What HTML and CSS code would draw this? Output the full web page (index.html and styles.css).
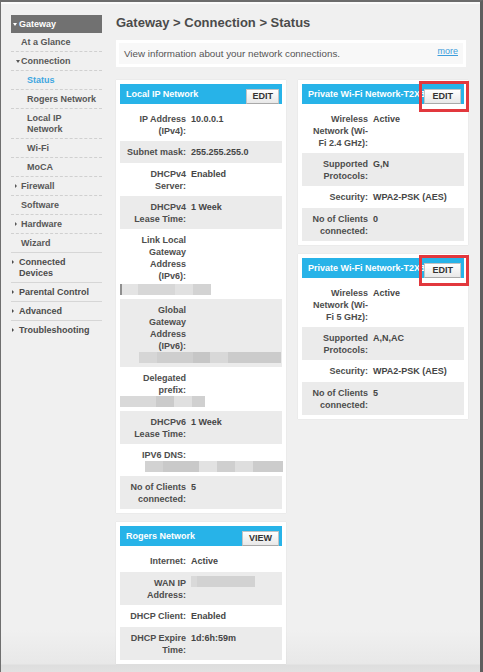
FILE: index.html
```html
<!DOCTYPE html>
<html lang="en">
<head>
<meta charset="utf-8">
<title>Gateway &gt; Connection &gt; Status</title>
<link rel="stylesheet" href="styles.css">
</head>
<body>
<div class="window">
  <nav class="sidebar">
    <div class="nav-head"><span class="caret caret-down"></span>Gateway</div>
    <div class="nav-item l2">At a Glance</div>
    <div class="nav-item l2"><span class="caret caret-down"></span>Connection</div>
    <div class="nav-item l3 active">Status</div>
    <div class="nav-item l3">Rogers Network</div>
    <div class="nav-item l3">Local IP<br>Network</div>
    <div class="nav-item l3">Wi-Fi</div>
    <div class="nav-item l3">MoCA</div>
    <div class="nav-item l2"><span class="caret caret-right"></span>Firewall</div>
    <div class="nav-item l2">Software</div>
    <div class="nav-item l2"><span class="caret caret-right"></span>Hardware</div>
    <div class="nav-item l2 solid">Wizard</div>
    <div class="nav-item l1"><span class="caret caret-right"></span>Connected<br>Devices</div>
    <div class="nav-item l1"><span class="caret caret-right"></span>Parental Control</div>
    <div class="nav-item l1"><span class="caret caret-right"></span>Advanced</div>
    <div class="nav-item l1 last"><span class="caret caret-right"></span>Troubleshooting</div>
  </nav>

  <main class="main">
    <h1 class="page-title">Gateway &gt; Connection &gt; Status</h1>
    <div class="intro">
      <div class="intro-inner">
        <span>View information about your network connections.</span>
        <a class="more" href="#">more</a>
      </div>
    </div>

    <div class="columns">
      <div class="col">
        <section class="card">
          <header class="card-head">
            <h2 class="card-title">Local IP Network</h2>
            <span class="btn">EDIT</span>
          </header>
          <div class="rows">
            <div class="row"><div class="label">IP Address (IPv4):</div><div class="value">10.0.0.1</div></div>
            <div class="row"><div class="label">Subnet mask:</div><div class="value">255.255.255.0</div></div>
            <div class="row"><div class="label">DHCPv4 Server:</div><div class="value">Enabled</div></div>
            <div class="row"><div class="label">DHCPv4 Lease Time:</div><div class="value">1 Week</div></div>
            <div class="row row-stack"><div class="label">Link Local Gateway Address (IPv6):</div><div class="blur blur-link"></div></div>
            <div class="row row-stack"><div class="label">Global Gateway Address (IPv6):</div><div class="blur blur-global"></div></div>
            <div class="row row-stack"><div class="label">Delegated prefix:</div><div class="blur blur-prefix"></div></div>
            <div class="row"><div class="label">DHCPv6 Lease Time:</div><div class="value">1 Week</div></div>
            <div class="row row-stack"><div class="label">IPV6 DNS:</div><div class="blur blur-dns"></div></div>
            <div class="row"><div class="label">No of Clients connected:</div><div class="value">5</div></div>
          </div>
        </section>

        <section class="card">
          <header class="card-head">
            <h2 class="card-title">Rogers Network</h2>
            <span class="btn btn-view">VIEW</span>
          </header>
          <div class="rows">
            <div class="row"><div class="label">Internet:</div><div class="value">Active</div></div>
            <div class="row"><div class="label">WAN IP Address:</div><div class="value"><span class="blur-wan"></span></div></div>
            <div class="row"><div class="label">DHCP Client:</div><div class="value">Enabled</div></div>
            <div class="row"><div class="label">DHCP Expire Time:</div><div class="value">1d:6h:59m</div></div>
          </div>
        </section>

        <section class="card">
          <header class="card-head"></header>
        </section>
      </div>

      <div class="col">
        <section class="card">
          <header class="card-head">
            <h2 class="card-title">Private Wi-Fi Network-T2X36</h2>
            <span class="btn btn-wide">EDIT<span class="annot"></span></span>
          </header>
          <div class="rows">
            <div class="row"><div class="label">Wireless Network (Wi-Fi 2.4 GHz):</div><div class="value">Active</div></div>
            <div class="row"><div class="label">Supported Protocols:</div><div class="value">G,N</div></div>
            <div class="row"><div class="label">Security:</div><div class="value">WPA2-PSK (AES)</div></div>
            <div class="row"><div class="label">No of Clients connected:</div><div class="value">0</div></div>
          </div>
        </section>

        <section class="card">
          <header class="card-head">
            <h2 class="card-title">Private Wi-Fi Network-T2X36</h2>
            <span class="btn btn-wide">EDIT<span class="annot"></span></span>
          </header>
          <div class="rows">
            <div class="row"><div class="label">Wireless Network (Wi-Fi 5 GHz):</div><div class="value">Active</div></div>
            <div class="row"><div class="label">Supported Protocols:</div><div class="value">A,N,AC</div></div>
            <div class="row"><div class="label">Security:</div><div class="value">WPA2-PSK (AES)</div></div>
            <div class="row"><div class="label">No of Clients connected:</div><div class="value">5</div></div>
          </div>
        </section>
      </div>
    </div>
  </main>
</div>
</body>
</html>
```

FILE: styles.css
```css
html, body {
  margin: 0;
  padding: 0;
  overflow: hidden;
}

body {
  font-family: "Liberation Sans", Arial, sans-serif;
  color: #4a4a4a;
}

.window {
  box-sizing: border-box;
  height: 672px;
  display: flex;
  align-items: flex-start;
  padding: 13px 12px 0 10px;
  border-top: 2px solid #6c6c6c;
  border-left: 1px solid #6f6f6f;
  border-right: 3px solid #5e5e5e;
  box-shadow: inset 0 2px 0 #fbfbfb;
  overflow: hidden;
  background: linear-gradient(to bottom, #f0f0f0 0, #f0f0f0 628px, #e8e8e8 662px, #dedede 663px, #e1e1e1 670px);
}

/* ---------- sidebar ---------- */
.sidebar {
  flex: none;
  width: 91px;
  font-size: 9px;
  font-weight: bold;
  line-height: 11px;
  color: #575757;
}

.nav-head {
  height: 18px;
  line-height: 18px;
  padding-left: 8px;
  background: #717171;
  color: #fff;
}

.nav-item {
  padding: 3.5px 4px 3.5px 10px;
  border-bottom: 1px dashed #d0d0d0;
}

.nav-item.l3 {
  padding-left: 16px;
}

.nav-item.l1 {
  padding-left: 8px;
  color: #4b4b4b;
  border-bottom: 1px solid #d6d6d6;
}

.nav-item.solid {
  border-bottom: 1px solid #d6d6d6;
}

.nav-item.last {
  border-bottom: none;
}

.nav-item.active {
  color: #3ea7e0;
}

.caret {
  display: inline-block;
  width: 0;
  height: 0;
  vertical-align: middle;
}

.caret-down {
  border-left: 2px solid transparent;
  border-right: 2px solid transparent;
  border-top: 3px solid currentColor;
}

.caret-right {
  border-top: 2px solid transparent;
  border-bottom: 2px solid transparent;
  border-left: 2px solid currentColor;
}

.nav-head .caret {
  margin: 0 2px 0 -6px;
}

.l2 .caret-down {
  margin: 0 1px 0 -5px;
}

.l2 .caret-right {
  margin: 0 4px 0 -6px;
}

.l1 .caret-right {
  margin: 0 5px 0 -7px;
}

/* ---------- main ---------- */
.main {
  flex: none;
  width: 352px;
  margin-left: 14px;
}

.page-title {
  margin: 0 0 10px;
  font-size: 13px;
  line-height: 15px;
  font-weight: bold;
  color: #4b4b4b;
}

.intro {
  margin: 0 2px 13px 0;
  padding: 3px;
  background: #fff;
}

.intro-inner {
  height: 21px;
  display: flex;
  align-items: center;
  justify-content: space-between;
  padding: 0 5px;
  background: #f8f8f8;
  font-size: 9.8px;
  color: #555;
}

.more {
  align-self: flex-start;
  padding-top: 3px;
  font-size: 9px;
  line-height: 11px;
  color: #3d9ddb;
  text-decoration: underline;
}

.columns {
  display: grid;
  grid-template-columns: 170px 170px;
  column-gap: 12px;
  align-items: start;
}

.col {
  display: flex;
  flex-direction: column;
  gap: 9px;
}

/* ---------- cards ---------- */
.card {
  background: #fff;
  padding: 4px;
  box-shadow: 0 0 1px rgba(0, 0, 0, 0.12);
}

.card-head {
  position: relative;
  height: 20px;
  background: #27b3e8;
}

.card-title {
  margin: 0;
  padding-left: 6px;
  overflow: hidden;
  white-space: nowrap;
  font-size: 9px;
  line-height: 20px;
  font-weight: bold;
  color: #fff;
}

.btn {
  position: absolute;
  right: 3px;
  bottom: 0;
  box-sizing: border-box;
  height: 15px;
  padding: 0 5px;
  border: 1px solid #c3c3c3;
  border-bottom-color: #a9a9a9;
  background: linear-gradient(to bottom, #ffffff, #e8e8e8);
  font-size: 9px;
  line-height: 13px;
  font-weight: bold;
  color: #333;
}

.btn-view {
  padding: 0 6px;
}

.btn-wide {
  padding: 0 7px;
}

.annot {
  position: absolute;
  top: -9px;
  right: -9px;
  bottom: -9px;
  left: -6px;
  border: 3px solid #e2383d;
}

.rows {
  padding-top: 4px;
}

.row {
  box-sizing: border-box;
  min-height: 22px;
  display: flex;
  padding: 5px 0 4px;
  font-size: 9px;
  line-height: 12px;
  font-weight: bold;
}

.row:nth-child(even) {
  background: #ebebeb;
}

.label {
  flex: none;
  box-sizing: border-box;
  width: 66px;
  padding-left: 4px;
  text-align: right;
  color: #4d4d4d;
}

.value {
  flex: 1;
  min-width: 0;
  margin-left: 5px;
  color: #454545;
}

.row-stack {
  display: block;
}

.blur {
  height: 11px;
}

.blur-link {
  width: 91px;
  margin-top: 2px;
  background: linear-gradient(to right, #8f8f8f 0 2px, #e4e4e4 2px 18px, #d7d7d7 18px 55px, #e1e1e1 55px 73px, #d3d3d3 73px);
}

.blur-global {
  width: 142px;
  margin-left: 19px;
  background: linear-gradient(to right, #d6d6d6 0 18px, #cecece 18px 54px, #c6c6c6 54px 71px, #d8d8d8 71px 89px, #cbcbcb 89px);
}

.blur-prefix {
  width: 85px;
  background: linear-gradient(to right, #d9d9d9 0 36px, #cbcbcb 36px 54px, #e0e0e0 54px 72px, #d0d0d0 72px);
}

.blur-dns {
  width: 138px;
  margin-left: 25px;
  background: linear-gradient(to right, #d2d2d2 0 18px, #c9c9c9 18px 54px, #e2e2e2 54px 72px, #cfcfcf 72px 90px, #dedede 90px 108px, #cccccc 108px);
}

.blur-wan {
  display: inline-block;
  vertical-align: top;
  width: 64px;
  height: 11px;
  margin-top: -1px;
  background: linear-gradient(to right, #d9d9d9 0 6px, #d2d2d2 6px);
}
```
